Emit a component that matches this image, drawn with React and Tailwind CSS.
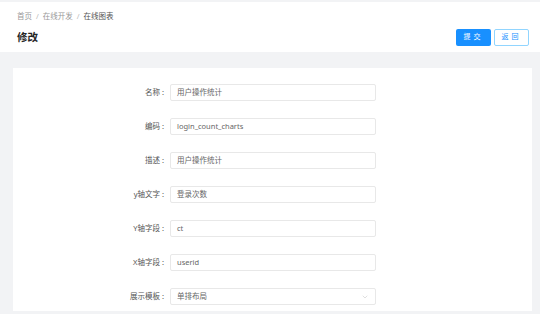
import { ChevronDown } from 'lucide-react';

const fields = [
    { label: '名称', value: '用户操作统计' },
    { label: '编码', value: 'login_count_charts' },
    { label: '描述', value: '用户操作统计' },
    { label: 'y轴文字', value: '登录次数' },
    { label: 'Y轴字段', value: 'ct' },
    { label: 'X轴字段', value: 'userid' },
];

function FormRow({ label, children }) {
    return (
        <div className="flex items-center">
            <div className="w-[157px] shrink-0 text-right text-[7.5px] text-[#555] leading-none">
                {label}
                <span className="ml-[2px] mr-[6px]">:</span>
            </div>
            {children}
        </div>
    );
}

export default function App() {
    return (
        <div
            className="h-[314px] w-[540px] overflow-hidden bg-[#f2f3f5] pt-[2px]"
            style={{ fontFamily: '"Noto Sans", "Noto Sans CJK SC", sans-serif' }}
        >
            {/* 页头 */}
            <div className="h-[50px] bg-white pl-[17px] pr-[11px] pt-[10px]">
                <div className="flex items-center gap-[4px] text-[7.5px] leading-[9px] text-[#999]">
                    <span>首页</span>
                    <span className="text-[#bbb]">/</span>
                    <span>在线开发</span>
                    <span className="text-[#bbb]">/</span>
                    <span className="text-[#555]">在线图表</span>
                </div>
                <div className="mt-[8px] flex items-center justify-between">
                    <h1 className="text-[10.5px] font-bold leading-none text-[#262626]">修改</h1>
                    <div className="flex gap-[3px]">
                        <button className="flex h-[17px] w-[35px] items-center justify-center rounded-[2px] bg-[#1890ff] text-[7px] tracking-[3px] text-white">
                            提交
                        </button>
                        <button className="flex h-[17px] w-[35px] items-center justify-center rounded-[2px] border border-[#91d5ff] bg-white text-[7px] tracking-[3px] text-[#1890ff]">
                            返回
                        </button>
                    </div>
                </div>
            </div>

            {/* 表单卡片 */}
            <div className="ml-[13px] mr-[8px] mt-[16px] flex flex-col gap-[17px] bg-white pb-[6px] pt-[16px]">
                {fields.map((f) => (
                    <FormRow key={f.label} label={f.label}>
                        <div className="flex h-[17px] w-[206px] items-center rounded-[2px] border border-[#e8e8e8] bg-white px-[6px] text-[7.5px] text-[#666]">
                            {f.value}
                        </div>
                    </FormRow>
                ))}
                <FormRow label="展示模板">
                    <div className="flex h-[17px] w-[206px] items-center justify-between rounded-[2px] border border-[#e8e8e8] bg-white pl-[6px] pr-[6px] text-[7.5px] text-[#666]">
                        <span>单排布局</span>
                        <ChevronDown size={8} strokeWidth={1.5} className="text-[#c0c0c0]" />
                    </div>
                </FormRow>
            </div>
        </div>
    );
}
